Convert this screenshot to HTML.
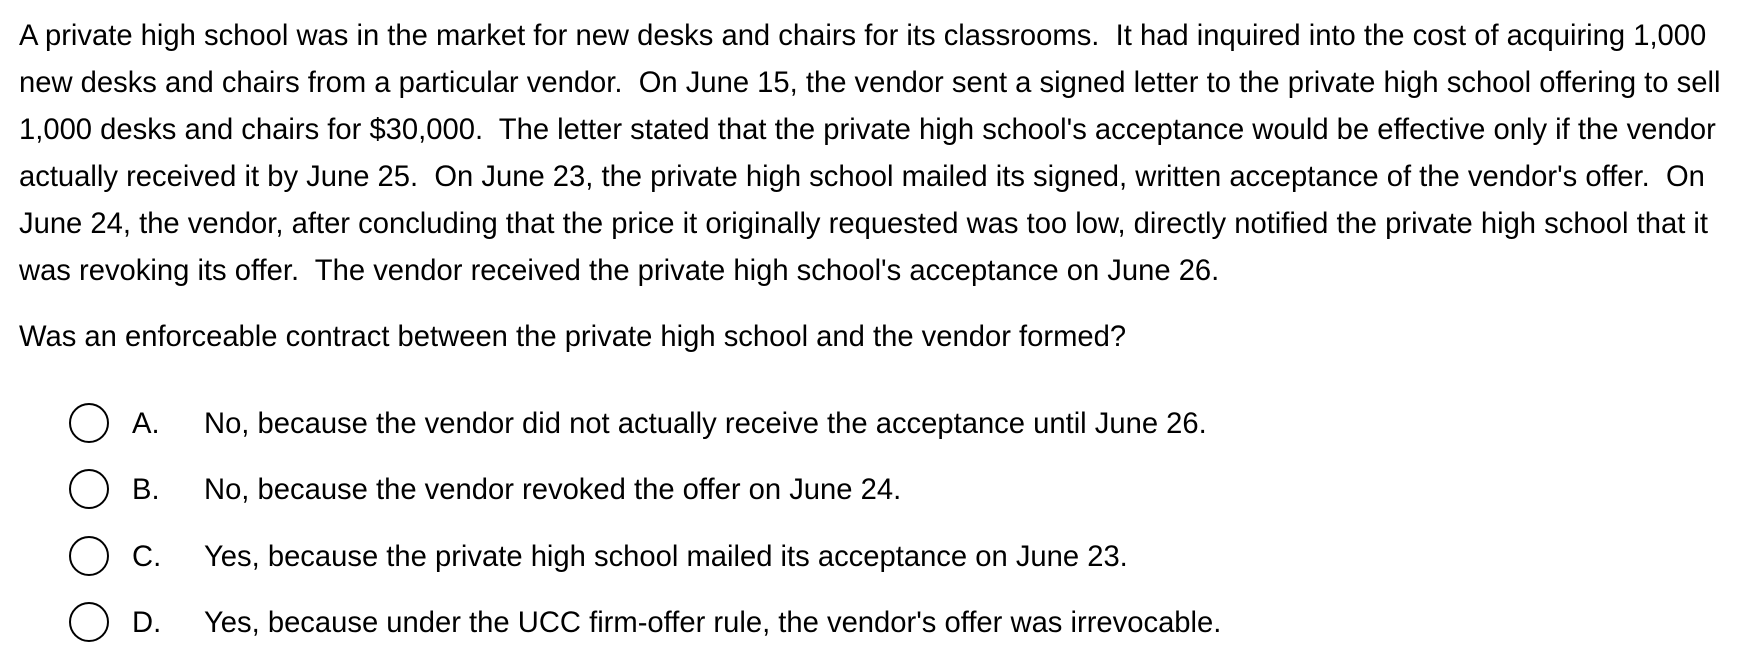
<!DOCTYPE html>
<html><head><meta charset="utf-8"><style>
html,body{margin:0;padding:0;background:#fff;}
body{width:1748px;height:653px;overflow:hidden;font-family:"Liberation Sans",Arial,sans-serif;color:#000;font-size:29.2px;}
.p{position:absolute;left:19px;top:13px;width:1740px;line-height:47px;white-space:pre;}
.q{position:absolute;left:19px;top:314px;line-height:47px;}
.opt{position:absolute;left:0;height:40px;}
.c{position:absolute;left:69px;width:36px;height:36px;border:2px solid #000;border-radius:50%;top:0;}
.l{position:absolute;left:132px;top:5px;line-height:33px;}
.t{position:absolute;left:204px;top:5px;line-height:33px;white-space:nowrap;}
</style></head><body>
<div class="p">A private high school was in the market for new desks and chairs for its classrooms.  It had inquired into the cost of acquiring 1,000
new desks and chairs from a particular vendor.  On June 15, the vendor sent a signed letter to the private high school offering to sell
1,000 desks and chairs for $30,000.  The letter stated that the private high school's acceptance would be effective only if the vendor
actually received it by June 25.  On June 23, the private high school mailed its signed, written acceptance of the vendor's offer.  On
June 24, the vendor, after concluding that the price it originally requested was too low, directly notified the private high school that it
was revoking its offer.  The vendor received the private high school's acceptance on June 26.</div>
<div class="q">Was an enforceable contract between the private high school and the vendor formed?</div>
<div class="opt" style="top:403px"><div class="c"></div><div class="l">A.</div><div class="t">No, because the vendor did not actually receive the acceptance until June 26.</div></div>
<div class="opt" style="top:469px"><div class="c"></div><div class="l">B.</div><div class="t">No, because the vendor revoked the offer on June 24.</div></div>
<div class="opt" style="top:536px"><div class="c"></div><div class="l">C.</div><div class="t">Yes, because the private high school mailed its acceptance on June 23.</div></div>
<div class="opt" style="top:602px"><div class="c"></div><div class="l">D.</div><div class="t">Yes, because under the UCC firm-offer rule, the vendor's offer was irrevocable.</div></div>
</body></html>
